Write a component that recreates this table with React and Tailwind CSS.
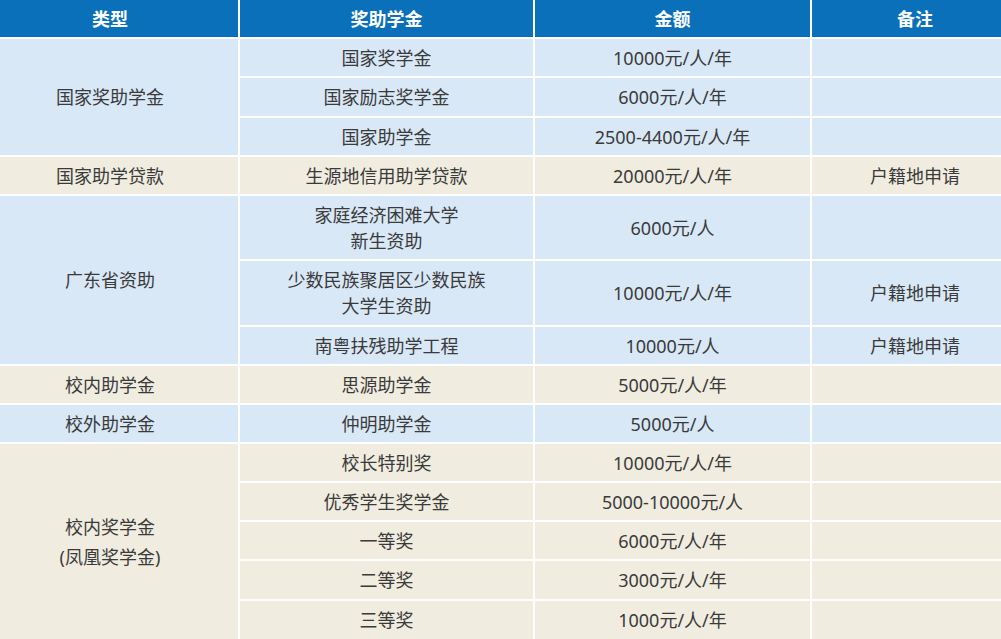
import React from 'react';

const BLUE = 'bg-[#d9e8f7]';
const BEIGE = 'bg-[#f0ede0]';

// one cell in the grid, centred text
function Cell({ bg, className = '', children }) {
  return (
    <div className={`${bg} flex items-center justify-center text-center leading-[26px] ${className}`}>
      {children}
    </div>
  );
}

const rows = [
  { bg: BLUE, name: '国家奖学金', amount: '10000元/人/年', note: '' },
  { bg: BLUE, name: '国家励志奖学金', amount: '6000元/人/年', note: '' },
  { bg: BLUE, name: '国家助学金', amount: '2500-4400元/人/年', note: '' },
  { bg: BEIGE, name: '生源地信用助学贷款', amount: '20000元/人/年', note: '户籍地申请' },
  { bg: BLUE, name: ['家庭经济困难大学', '新生资助'], amount: '6000元/人', note: '' },
  { bg: BLUE, name: ['少数民族聚居区少数民族', '大学生资助'], amount: '10000元/人/年', note: '户籍地申请' },
  { bg: BLUE, name: '南粤扶残助学工程', amount: '10000元/人', note: '户籍地申请' },
  { bg: BEIGE, name: '思源助学金', amount: '5000元/人/年', note: '' },
  { bg: BLUE, name: '仲明助学金', amount: '5000元/人', note: '' },
  { bg: BEIGE, name: '校长特别奖', amount: '10000元/人/年', note: '' },
  { bg: BEIGE, name: '优秀学生奖学金', amount: '5000-10000元/人', note: '' },
  { bg: BEIGE, name: '一等奖', amount: '6000元/人/年', note: '' },
  { bg: BEIGE, name: '二等奖', amount: '3000元/人/年', note: '' },
  { bg: BEIGE, name: '三等奖', amount: '1000元/人/年', note: '' },
];

const types = [
  { bg: BLUE, label: ['国家奖助学金'], span: 'row-span-3' },
  { bg: BEIGE, label: ['国家助学贷款'], span: '' },
  { bg: BLUE, label: ['广东省资助'], span: 'row-span-3' },
  { bg: BEIGE, label: ['校内助学金'], span: '' },
  { bg: BLUE, label: ['校外助学金'], span: '' },
  { bg: BEIGE, label: ['校内奖学金', '(凤凰奖学金)'], span: 'row-span-5 leading-[30px]' },
];

export default function App() {
  return (
    <div className="w-[1001px] h-[639px] overflow-hidden bg-white">
      <div
        className="-ml-[18px] grid grid-flow-col gap-[2px] text-[18px] text-[#3a3a3a] grid-cols-[256px_293px_275px_206px] grid-rows-[37px_37px_38px_37px_37px_63px_64px_37px_37px_37px_37px_37px_37px_38px_38px]"
        style={{ fontFamily: '"Noto Sans", "Noto Sans CJK SC", sans-serif' }}
      >
        {/* column 1 */}
        <Cell bg="bg-[#0a70ba]" className="text-white font-bold">类型</Cell>
        {types.map((t, i) => (
          <Cell key={i} bg={t.bg} className={t.span}>
            <div>
              {t.label.map((l) => (
                <div key={l}>{l}</div>
              ))}
            </div>
          </Cell>
        ))}

        {/* column 2 */}
        <Cell bg="bg-[#0a70ba]" className="text-white font-bold">奖助学金</Cell>
        {rows.map((r, i) => (
          <Cell key={i} bg={r.bg}>
            {Array.isArray(r.name) ? (
              <div>
                {r.name.map((l) => (
                  <div key={l}>{l}</div>
                ))}
              </div>
            ) : (
              r.name
            )}
          </Cell>
        ))}

        {/* column 3 */}
        <Cell bg="bg-[#0a70ba]" className="text-white font-bold">金额</Cell>
        {rows.map((r, i) => (
          <Cell key={i} bg={r.bg}>{r.amount}</Cell>
        ))}

        {/* column 4 */}
        <Cell bg="bg-[#0a70ba]" className="text-white font-bold">备注</Cell>
        {rows.map((r, i) => (
          <Cell key={i} bg={r.bg}>{r.note}</Cell>
        ))}
      </div>
    </div>
  );
}
